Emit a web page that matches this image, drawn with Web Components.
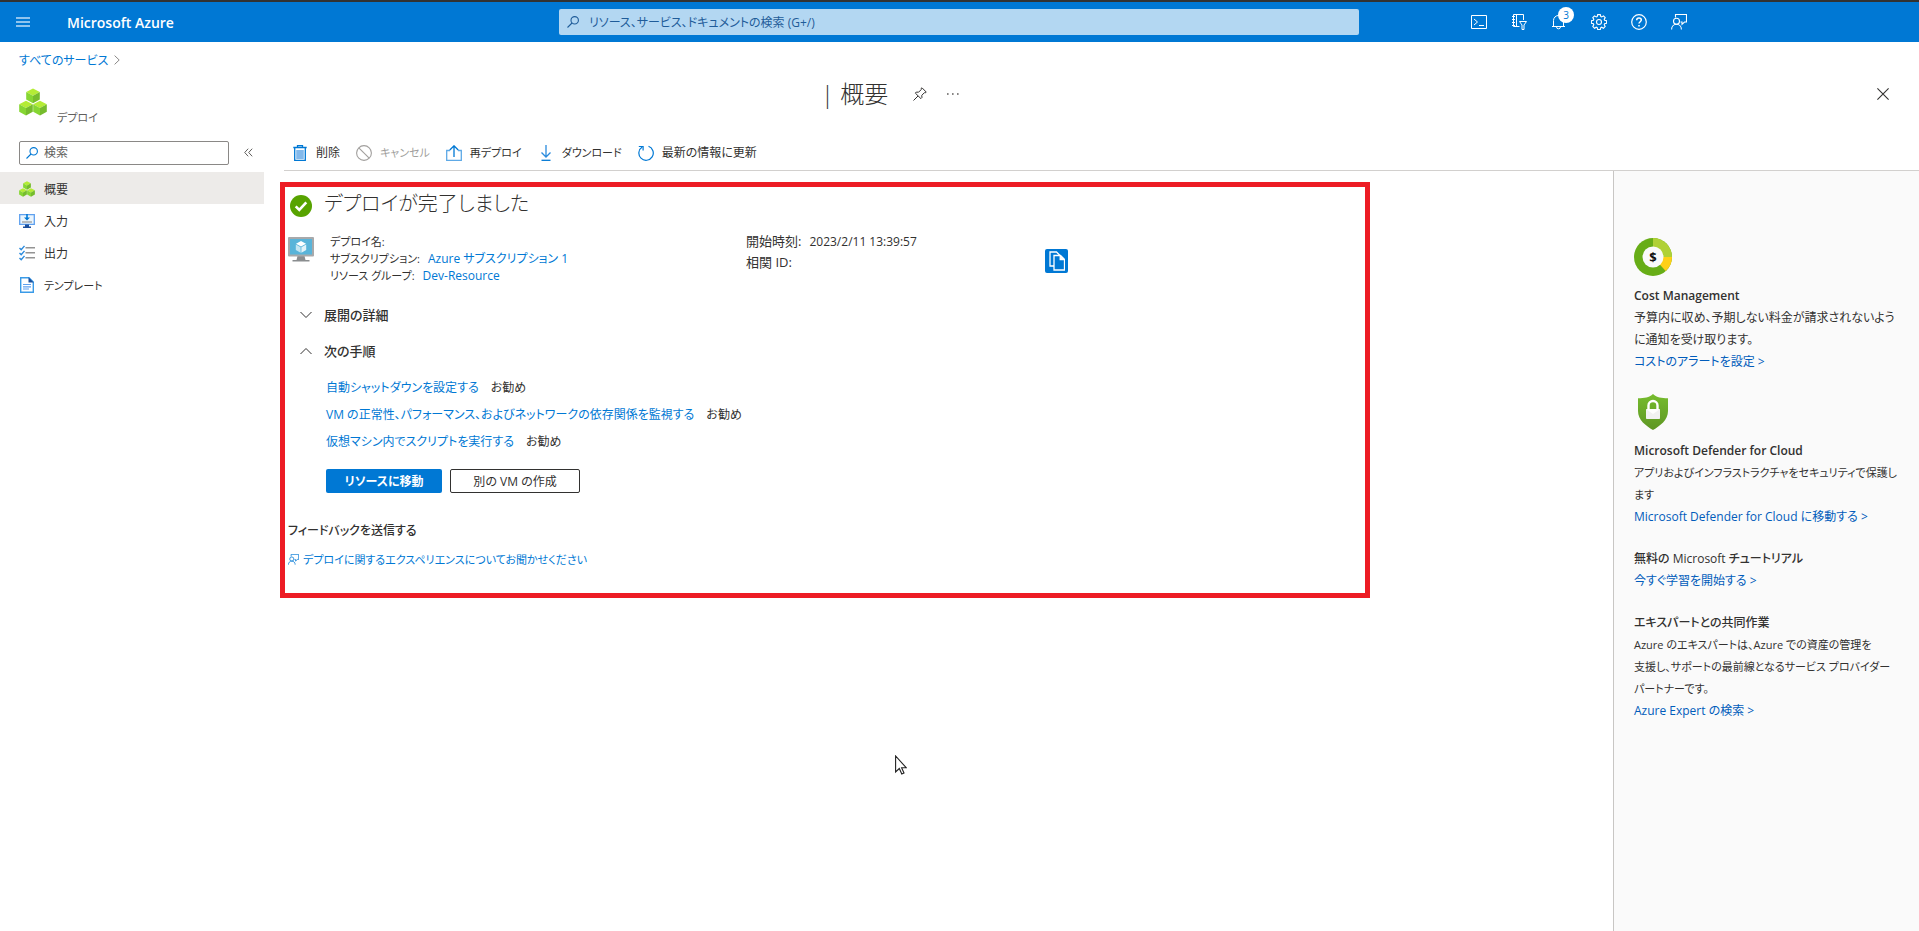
<!DOCTYPE html>
<html lang="ja">
<head>
<meta charset="utf-8">
<meta name="viewport" content="width=device-width, initial-scale=1">
<title>概要 - Microsoft Azure</title>
<style>
html, body { height: 100%; }
body {
  margin: 0;
  background: #fff;
  color: #323130;
  font-family: "Open Sans", "Noto Sans CJK JP", sans-serif;
  font-size: 12px;
  line-height: 17px;
  font-feature-settings: "palt";
  --blue: #0078d4;
  --link: #015cbb;
}
</style>
</head>
<body>
<az-portal></az-portal>

<script>
const CUBE = '<path d="M14 .5 20.800 4 14 7.800 7.200 4z" fill="#b4ec36"/><path d="M7.200 4 14 7.800v7.400l-6.800-3.700z" fill="#86d633"/><path d="M20.800 4 14 7.800v7.400l6.800-3.700z" fill="#76bc2d"/>';
const ICONS = {
  menu: ['0 0 14 10', '<path d="M0 1h14M0 5h14M0 9h14" stroke="#8fc4ee" stroke-width="2" fill="none"/>'],
  search: ['0 0 12 12', '<g fill="none" stroke="currentColor" stroke-width="1.1"><circle cx="7.7" cy="4.3" r="3.7"/><path d="M5 7 .5 11.5"/></g>'],
  shell: ['0 0 16 16', '<g fill="none" stroke="currentColor"><path d="M.5 1.500h15v13H.5z"/><path d="M3 5l3.500 3L3 11M8 11.500h5"/></g>'],
  directory: ['0 0 16 16', '<g fill="none" stroke="currentColor"><path d="M8.500 12.500h-6V.5h10V6M5.500.5v12M1 2.500h3M1 5.500h3M1 8.500h3M1 11.500h3"/><path d="M8.500 7.500h7l-2.500 3.500v4.500h-2V11z" fill="#0078d4"/></g>'],
  bell: ['0 0 16 16', '<g fill="none" stroke="currentColor"><path d="M2.500 12.500V6.500A5 5 0 0 1 7.500 1.500a5 5 0 0 1 5 5v6M1 12.500h13M5.500 12.800a2 2 0 0 0 4 0"/></g>'],
  gear: ['0 0 16 16', '<g fill="none" stroke="currentColor" stroke-width="1.100"><circle cx="8" cy="8" r="2.500"/><path d="M6.700.6h2.600l.5 2 .9.4 1.800-1.100 1.700 1.700-1 1.800.4.900 2 .5v2.500l-2 .5-.4.900 1 1.800-1.700 1.800-1.800-1.100-.9.400-.5 2H6.700l-.5-2-.9-.4-1.800 1.100-1.700-1.800 1-1.800-.4-.9-2-.5V6.800l2-.5.4-.9-1-1.800 1.700-1.700L5.300 3l.9-.4z"/></g>'],
  help: ['0 0 16 16', '<g fill="none" stroke="currentColor" stroke-width="1.2"><circle cx="8" cy="8" r="7.300"/><path d="M5.700 6.200C5.700 4.800 6.700 4 8 4s2.300.8 2.300 2.100C10.300 7.600 8 7.900 8 9.600" stroke-width="1.500"/><path d="M8 11v1.500" stroke-width="1.600"/></g>'],
  feedback: ['0 0 16 16', '<g fill="none" stroke="currentColor" stroke-width="1.100"><circle cx="5.500" cy="7.300" r="3"/><path d="M.6 15.500c0-3 2-5.200 4.900-5.200s4.900 2.200 4.900 5.200M4.500 3.500V.5h11v7.500h-2l-2.500 2.300V8H9.500"/></g>'],
  chevronRight: ['0 0 6 10', '<path d="M.6.6 5.200 5 .6 9.400" fill="none" stroke="#8a8886"/>'],
  chevronDown: ['0 0 12 8', '<path d="M.5 1 6 6.500 11.500 1" fill="none" stroke="#323130"/>'],
  chevronUp: ['0 0 12 8', '<path d="M.5 7 6 1.500 11.500 7" fill="none" stroke="#323130"/>'],
  collapse: ['0 0 9 9', '<path d="M4.200.7.700 4.500l3.500 3.800M8.200.7 4.700 4.500l3.500 3.800" fill="none" stroke="#605e5c"/>'],
  pin: ['0 0 14 14', '<path d="M9 .8 13.200 5l-.6.800-1.200-.1-2.600 2.600.1 2.300-1 1L2.300 6.100l1-1 2.300.1 2.600-2.600-.1-1.100zM5 9 .5 13.500" fill="none" stroke="#323130" stroke-linejoin="round"/>'],
  more: ['0 0 12 2', '<path d="M0 .2h1.600v1.600H0zM5 .2h1.600v1.600H5zM10 .2h1.600v1.600H10z" fill="#605e5c"/>'],
  close: ['0 0 12 12', '<path d="M.4.4l11.200 11.200M11.600.4.4 11.600" fill="none" stroke="#323130" stroke-width="1.100"/>'],
  cubes: ['0 0 28 28', `${CUBE}<g transform="translate(-7 12.300)">${CUBE}</g><g transform="translate(7 12.300)">${CUBE}</g>`],
  input: ['0 0 16 16', '<path d="M.7 1.700h14.600v9.600H.7z" fill="#eaf5fd" stroke="#5ea0ef" stroke-width="1.300"/><path d="M6 11.500h4V14H6z" fill="#1b4f9c"/><path d="M4 13.500h8V15H4z" fill="#1b4f9c"/><path d="M3 9h10" stroke="#949494" stroke-width="1.200"/><path d="M7.200 1h1.600v3.500H11L8 7.500l-3-3h2.200z" fill="#0078d4"/>'],
  output: ['0 0 16 16', '<path d="M6.500 2.800H16M6.500 7.800H16M6.500 12.800H16" stroke="#949494" stroke-width="1.400"/><path d="m.5 3 1.700 1.700L5.500.9M.5 8l1.700 1.700 3.300-3.800M.5 13l1.700 1.700 3.300-3.800" fill="none" stroke="#2a8bdd" stroke-width="1.400"/>'],
  doc: ['0 0 14 16', '<path d="M.7.700h8.300l4.300 4.300v10.300H.7z" fill="#fff" stroke="#3a9be8" stroke-width="1.400"/><path d="M8.500.3 13.700 5.500H8.500z" fill="#1b4f9c"/><path d="M3 7.500h8M3 9.800h8M3 12h6" stroke="#5ea0ef" stroke-width="1.200"/>'],
  trash: ['-1 0 16 16', '<path d="M.3 2.500h13.400M4.500 2.500V.7h5v1.800M1.700 3v12.400h10.600V3" fill="none" stroke="#0078d4" stroke-width="1.300"/><path d="M3.200 5h7.600v9H3.200z" fill="#83b9eb"/>'],
  cancel: ['0 0 16 16', '<g fill="none" stroke="#a19f9d" stroke-width="1.100"><circle cx="8" cy="8" r="7.400"/><path d="m2.800 2.800 10.400 10.400"/></g>'],
  redeploy: ['0 0 16 16', '<path d="M4 5.500H.7v9.900h14.600V5.500H12" fill="none" stroke="#5ea9e6" stroke-width="1.300"/><path d="M8 12V1M3.800 5 8 .8 12.200 5" fill="none" stroke="#0078d4" stroke-width="1.300"/>'],
  download: ['-3 0 16 16', '<path d="M5 0v12M.5 7.500 5 12l4.500-4.500" fill="none" stroke="#2a8bdd" stroke-width="1.300"/><path d="M.5 15.300h9" stroke="#0078d4" stroke-width="1.300"/>'],
  refresh: ['0 0 16 16', '<path d="M10.500 1.300A7.200 7.200 0 1 1 4.200 2" fill="none" stroke="#0078d4" stroke-width="1.200"/><path d="M.8 1.500h4.300v4" fill="none" stroke="#0078d4" stroke-width="1.200"/>'],
  success: ['0 0 22 22', '<circle cx="11" cy="11" r="11" fill="#57a300"/><path d="m5.700 11.300 3.600 3.600 7-7.500" fill="none" stroke="#fff" stroke-width="2.600"/>'],
  vm: ['0 0 26 25', '<path d="M9.500 19h7l1 4h4v1.500h-17V23h4z" fill="#8a8d8f"/><rect width="26" height="19.500" rx="1" fill="#a7a9ab"/><path d="M2 2h22v15.500H2z" fill="#59b4d9"/><path d="m13 4 5 2.800L13 9.600 8 6.800z" fill="#fff"/><path d="M7.800 7.600 12.600 10.300v5.400L7.800 13z" fill="#c5e6f2"/><path d="m18.200 7.600-4.800 2.700v5.400l4.800-2.700z" fill="#e3f3f9"/>'],
  copy: ['0 0 16 20', '<g fill="#0078d4" stroke="#fff" stroke-width="1.300"><path d="M1 1h6.500l3 3v11H1z"/><path d="M5 4.500h6.500l4 4V19H5z"/><path d="M11.200 4.500v4.200h4.300" fill="#fff"/></g>'],
  cost: ['0 0 38 38', '<circle cx="19" cy="19" r="19" fill="#67ad17"/><path d="M19 19V0a19 19 0 0 1 19 19z" fill="#b0d136"/><path d="M19 19h19a19 19 0 0 1-6.300 14.100z" fill="#ffd018"/><circle cx="19" cy="19" r="10.500" fill="#fafafa"/>'],
  shield: ['0 0 30 36', '<defs><linearGradient id="g" x2="0" y2="1"><stop stop-color="#76bc2d"/><stop offset="1" stop-color="#5e9624"/></linearGradient></defs><path d="M15 0c4 3.500 8.500 4.300 15 4.300V17c0 9-8 15-15 19C8 32 0 26 0 17V4.300C6.500 4.300 11 3.500 15 0z" fill="url(#g)"/><path d="M10.500 15v-3.500a4.500 4.500 0 0 1 9 0V15" fill="none" stroke="#fff" stroke-width="2.400"/><rect x="8" y="15" width="14" height="10" rx=".8" fill="#f2f2f2"/><path d="m8 15 7 5 7-5z" fill="#fff"/>'],
  cursor: ['0 0 12 20', '<path d="M.6 1v16l3.700-3.500 2.500 5.500 2.200-1-2.400-5.300H11.200z" fill="#fff" stroke="#222" stroke-width="1.100"/>']
};

function define(name, css, html) {
  const template = document.createElement('template');
  template.innerHTML = `<style>*{box-sizing:border-box}h1,h2,h3,p,ul,dl,dd{margin:0;padding:0;font-size:inherit;font-weight:inherit}button,input{font:inherit;font-feature-settings:inherit;color:inherit}button{padding:0;border:0;background:none;cursor:pointer}a{color:var(--blue);text-decoration:none}a:hover{text-decoration:underline}${css}</style>${html}`;
  customElements.define(name, class extends HTMLElement {
    constructor() {
      super();
      this.attachShadow({ mode: 'open' }).append(template.content.cloneNode(true));
    }
  });
}

customElements.define('az-icon', class extends HTMLElement {
  connectedCallback() {
    if (this.shadowRoot) return;
    const [box, body] = ICONS[this.getAttribute('name')];
    const [, , w, h] = box.split(' ');
    const size = this.getAttribute('size');
    this.attachShadow({ mode: 'open' }).innerHTML =
      `<style>:host{display:block;flex:none;line-height:0}svg{display:block}</style>
       <svg viewBox="${box}" width="${size || w}" height="${size || h}" aria-hidden="true">${body}</svg>`;
  }
});

define('az-top-bar', `
:host { display: block; background: var(--blue); border-top: 2px solid #323232; color: #fff; }
header { display: grid; grid-template-columns: minmax(200px, 1fr) minmax(200px, 800px) minmax(360px, 1fr); height: 40px; padding-right: 1px; align-items: center; }
.brand { display: flex; align-items: center; gap: 37px; padding-left: 16px; }
.brand a { color: #fff; font-size: 14px; font-weight: 600; }
label { display: flex; align-items: center; gap: 10px; height: 26px; padding: 0 8px; border-radius: 2px; background: #b3d7f2; color: #1f5c99; }
input { flex: 1; border: 0; padding: 0; outline: 0; background: none; }
input::placeholder { color: inherit; opacity: 1; }
nav { display: flex; padding-left: 100px; }
nav button { position: relative; display: grid; place-items: center; width: 40px; height: 40px; }
.badge { position: absolute; right: 5px; top: 5px; width: 16px; height: 16px; border-radius: 8px; background: #fff; color: var(--blue); font-size: 10px; line-height: 16px; }
`, `
<header>
  <div class="brand"><button aria-label="メニュー"><az-icon name="menu"></az-icon></button><a href="#">Microsoft Azure</a></div>
  <label><az-icon name="search"></az-icon><input type="text" aria-label="検索" placeholder="リソース、サービス、ドキュメントの検索 (G+/)"></label>
  <nav>
    <button aria-label="Cloud Shell"><az-icon name="shell"></az-icon></button>
    <button aria-label="ディレクトリ"><az-icon name="directory"></az-icon></button>
    <button aria-label="通知"><az-icon name="bell"></az-icon><span class="badge">3</span></button>
    <button aria-label="設定"><az-icon name="gear"></az-icon></button>
    <button aria-label="ヘルプ"><az-icon name="help"></az-icon></button>
    <button aria-label="フィードバック"><az-icon name="feedback"></az-icon></button>
  </nav>
</header>`);

define('az-blade-header', `
:host { display: block; padding: 0 30px 0 19px; }
nav { display: flex; align-items: center; gap: 6px; height: 36px; }
.title { display: grid; grid-template-columns: 802px 1fr auto; align-items: start; height: 50px; }
.kind { display: flex; gap: 10px; align-items: start; padding-top: 10px; color: #605e5c; font-size: 11px; }
.kind span { padding-top: 21px; }
.name, .close { display: flex; align-items: center; gap: 20px; height: 32px; }
h1 { font-size: 24px; font-weight: 300; line-height: 32px; margin-right: 5px; }
`, `
<nav aria-label="階層"><a href="#">すべてのサービス</a><az-icon name="chevronRight"></az-icon></nav>
<div class="title">
  <div class="kind"><az-icon name="cubes"></az-icon><span>デプロイ</span></div>
  <div class="name"><h1>| 概要</h1><button aria-label="ピン留め"><az-icon name="pin"></az-icon></button><button aria-label="その他"><az-icon name="more"></az-icon></button></div>
  <button class="close" aria-label="閉じる"><az-icon name="close"></az-icon></button>
</div>`);

define('az-nav-item', `
:host { display: block; }
a { display: flex; align-items: center; height: 32px; padding: 2px 0 0 19px; gap: 9px; color: #323130; }
:host([selected]) a { background: #edebe9; }
:host([compact]) a { font-size: 11px; }
.icon { display: grid; width: 16px; place-items: center; }
`, `<a href="#"><span class="icon"><slot name="icon"></slot></span><span><slot></slot></span></a>`);

define('az-side-nav', `
:host { display: block; }
.find { display: flex; align-items: center; gap: 15px; height: 37px; padding-left: 19px; }
label { display: flex; align-items: center; gap: 6px; width: 210px; height: 24px; padding: 0 6px; border: 1px solid #8a8886; border-radius: 2px; color: #605e5c; }
label az-icon { color: var(--blue); }
input { min-width: 0; flex: 1; border: 0; padding: 0; outline: 0; background: none; }
input::placeholder { color: inherit; opacity: 1; }
nav { padding-top: 1px; }
`, `
<div class="find"><label><az-icon name="search"></az-icon><input type="text" aria-label="メニューの検索" placeholder="検索"></label><button aria-label="折りたたむ"><az-icon name="collapse"></az-icon></button></div>
<nav>
  <az-nav-item selected><az-icon slot="icon" name="cubes" size="16"></az-icon>概要</az-nav-item>
  <az-nav-item><az-icon slot="icon" name="input"></az-icon>入力</az-nav-item>
  <az-nav-item><az-icon slot="icon" name="output"></az-icon>出力</az-nav-item>
  <az-nav-item compact><az-icon slot="icon" name="doc"></az-icon>テンプレート</az-nav-item>
</nav>`);

define('az-command', `
:host { display: block; }
button { display: flex; align-items: center; gap: 8px; height: 24px; white-space: nowrap; }
:host([compact]) button { font-size: 11px; }
:host([muted]) button { color: #a19f9d; }
`, `<button type="button"><slot name="icon"></slot><span><slot></slot></span></button>`);

define('az-toolbar', `
:host { display: flex; align-items: center; gap: 16px; height: 37px; margin-left: 20px; padding: 1px 0 0 8px; border-bottom: 1px solid #d2d0ce; }
`, `
<az-command><az-icon slot="icon" name="trash"></az-icon>削除</az-command>
<az-command compact muted><az-icon slot="icon" name="cancel"></az-icon>キャンセル</az-command>
<az-command compact><az-icon slot="icon" name="redeploy"></az-icon>再デプロイ</az-command>
<az-command compact><az-icon slot="icon" name="download"></az-icon>ダウンロード</az-command>
<az-command><az-icon slot="icon" name="refresh"></az-icon>最新の情報に更新</az-command>`);

define('az-next-step', `
:host { display: flex; gap: 12px; height: 27px; align-items: center; }
`, `<a href="#"><slot></slot></a><span>お勧め</span>`);

define('az-deployment', `
:host { display: block; max-width: 1090px; margin: 11px 16px 0; border: 5px solid #ed1c24; padding: 0 3px 16px; }
.status { display: flex; align-items: center; gap: 12px; height: 32px; padding-left: 2px; }
.status az-icon { margin-top: 6px; }
h1 { font-size: 20px; font-weight: 300; line-height: 32px; padding-top: 2px; }
.facts { display: grid; grid-template-columns: 42px 416px 299px auto; justify-content: start; padding-top: 14px; }
.facts az-icon[name=vm] { margin-top: 4px; }
dl div { display: flex; align-items: baseline; gap: 8px; height: 17px; }
dt { font-size: 11px; }
dl.times div { height: 21px; }
.times dt { font-size: 13px; }
.copy { display: grid; place-items: center; width: 23px; height: 24px; margin-top: 16px; border-radius: 2px; background: var(--blue); }
.group { display: flex; align-items: center; gap: 12px; height: 36px; padding-left: 12px; font-size: 13px; font-weight: 500; }
.groups { padding-top: 13px; }
.steps { padding: 5px 0 0 38px; }
.actions { display: flex; gap: 8px; padding: 14px 0 0 38px; }
.actions button { height: 24px; width: 116px; border-radius: 2px; background: var(--blue); color: #fff; font-weight: 600; }
.actions button + button { width: 130px; border: 1px solid #323130; background: #fff; color: #323130; font-weight: 400; }
.feedback { padding-top: 27px; }
h2 { line-height: 22px; font-weight: 500; }
.feedback a { display: flex; align-items: center; gap: 4px; height: 35px; font-size: 11px; }
`, `
<div class="status"><az-icon name="success"></az-icon><h1>デプロイが完了しました</h1></div>
<div class="facts">
  <az-icon name="vm"></az-icon>
  <dl>
    <div><dt>デプロイ名:</dt></div>
    <div><dt>サブスクリプション:</dt><dd><a href="#">Azure サブスクリプション 1</a></dd></div>
    <div><dt>リソース グループ:</dt><dd><a href="#">Dev-Resource</a></dd></div>
  </dl>
  <dl class="times">
    <div><dt>開始時刻:</dt><dd>2023/2/11 13:39:57</dd></div>
    <div><dt>相関 ID:</dt></div>
  </dl>
  <button class="copy" aria-label="コピー"><az-icon name="copy"></az-icon></button>
</div>
<div class="groups">
  <button class="group" aria-expanded="false"><az-icon name="chevronDown"></az-icon>展開の詳細</button>
  <button class="group" aria-expanded="true"><az-icon name="chevronUp"></az-icon>次の手順</button>
</div>
<div class="steps">
  <az-next-step>自動シャットダウンを設定する</az-next-step>
  <az-next-step>VM の正常性、パフォーマンス、およびネットワークの依存関係を監視する</az-next-step>
  <az-next-step>仮想マシン内でスクリプトを実行する</az-next-step>
</div>
<div class="actions"><button>リソースに移動</button><button>別の VM の作成</button></div>
<div class="feedback">
  <h2>フィードバックを送信する</h2>
  <a href="#"><az-icon name="feedback" size="11"></az-icon>デプロイに関するエクスペリエンスについてお聞かせください</a>
</div>`);

define('az-info-card', `
:host { display: block; line-height: 22px; }
h3 { font-weight: 500; }
:host([latin]) h3 { font-weight: 600; }
:host([compact]) p { font-size: 11px; }
a { color: var(--link); }
`, `<slot name="icon"></slot><h3><slot name="title"></slot></h3><p><slot></slot></p><a href="#"><slot name="link"></slot></a>`);

define('az-info-panel', `
:host { display: block; padding: 67px 18px 0 20px; border-left: 1px solid #c8c6c4; background: #fafafa; }
az-info-card { margin-bottom: 20px; }
.icon { display: grid; position: relative; place-items: center; width: 38px; height: 38px; margin-bottom: 9px; }
.icon b { position: absolute; color: #111; font-size: 13px; line-height: 38px; }
`, `
<az-info-card latin><span class="icon" slot="icon"><az-icon name="cost"></az-icon><b>$</b></span><span slot="title">Cost Management</span>予算内に収め、予期しない料金が請求されないように通知を受け取ります。<span slot="link">コストのアラートを設定 &gt;</span></az-info-card>
<az-info-card latin compact><span class="icon" slot="icon"><az-icon name="shield"></az-icon></span><span slot="title">Microsoft Defender for Cloud</span>アプリおよびインフラストラクチャをセキュリティで保護します<span slot="link">Microsoft Defender for Cloud に移動する &gt;</span></az-info-card>
<az-info-card><span slot="title">無料の Microsoft チュートリアル</span><span slot="link">今すぐ学習を開始する &gt;</span></az-info-card>
<az-info-card compact><span slot="title">エキスパートとの共同作業</span>Azure のエキスパートは、Azure での資産の管理を<br>支援し、サポートの最前線となるサービス プロバイダー<br>パートナーです。<span slot="link">Azure Expert の検索 &gt;</span></az-info-card>`);

define('az-portal', `
:host { display: flex; flex-direction: column; min-height: 100%; position: relative; }
.body { flex: 1; display: grid; grid-template-columns: 264px 1fr 306px; grid-template-rows: auto 1fr; padding-top: 6px; }
az-side-nav { grid-row: 1 / 3; }
az-toolbar { grid-column: 2 / 4; }
.pointer { position: absolute; left: 895px; top: 755px; pointer-events: none; }
`, `
<az-top-bar></az-top-bar>
<az-blade-header></az-blade-header>
<div class="body">
  <az-side-nav></az-side-nav>
  <az-toolbar></az-toolbar>
  <main><az-deployment></az-deployment></main>
  <az-info-panel></az-info-panel>
</div>
<az-icon class="pointer" name="cursor"></az-icon>`);
</script>
</body>
</html>
